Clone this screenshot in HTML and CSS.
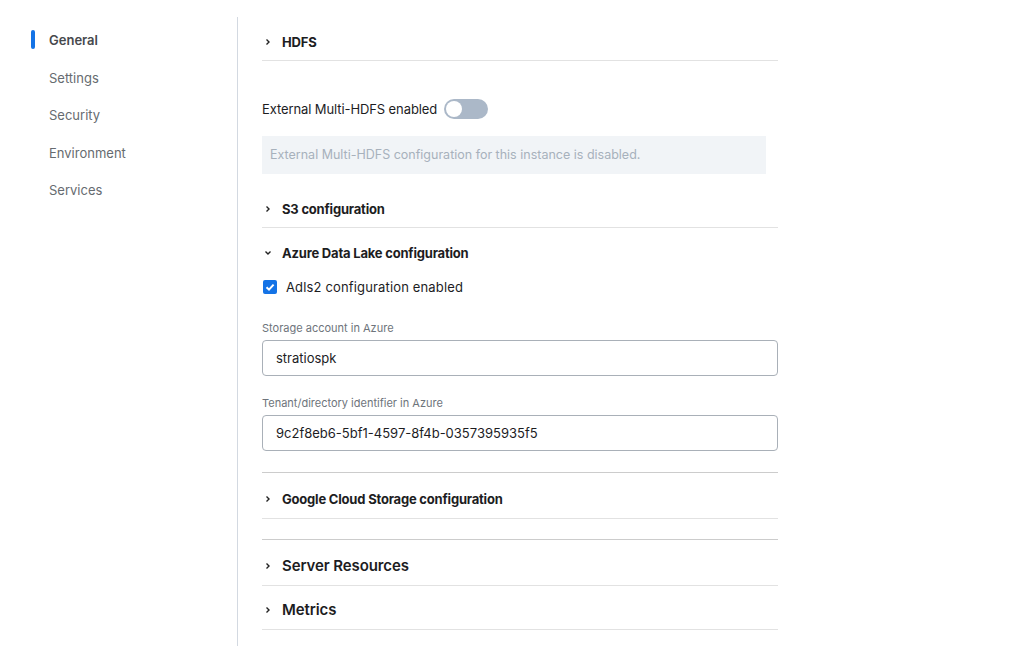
FILE: index.html
```html
<!DOCTYPE html>
<html>
<head>
<meta charset="utf-8">
<link rel="stylesheet" href="styles.css">
</head>
<body>
<div class="layout">
  <nav class="sidebar">
    <a class="nav-item active">General</a>
    <a class="nav-item">Settings</a>
    <a class="nav-item">Security</a>
    <a class="nav-item">Environment</a>
    <a class="nav-item">Services</a>
  </nav>
  <main class="main">
    <div class="section-header">
      <svg class="chev" viewBox="0 0 8 8" width="8" height="8"><path d="M2.5 1.5 L5 4 L2.5 6.5" fill="none" stroke="#222" stroke-width="1.4"/></svg>
      <span class="title">HDFS</span>
    </div>
    <div class="hdfs-body">
      <div class="toggle-row">
        <span>External Multi-HDFS enabled</span>
        <span class="toggle"><span class="knob"></span></span>
      </div>
      <div class="info-box">External Multi-HDFS configuration for this instance is disabled.</div>
    </div>
    <div class="section-header">
      <svg class="chev" viewBox="0 0 8 8" width="8" height="8"><path d="M2.5 1.5 L5 4 L2.5 6.5" fill="none" stroke="#222" stroke-width="1.4"/></svg>
      <span class="title">S3 configuration</span>
    </div>
    <div class="azure">
      <div class="section-header open">
        <svg class="chev" viewBox="0 0 8 8" width="8" height="8"><path d="M1.5 2.5 L4 5 L6.5 2.5" fill="none" stroke="#222" stroke-width="1.4"/></svg>
        <span class="title">Azure Data Lake configuration</span>
      </div>
      <label class="check-row">
        <span class="checkbox"><svg viewBox="0 0 14 14" width="14" height="14"><path d="M3.5 7.2 L6 9.6 L10.6 4.6" fill="none" stroke="#fff" stroke-width="2"/></svg></span>
        <span>Adls2 configuration enabled</span>
      </label>
      <div class="field first">
        <div class="field-label">Storage account in Azure</div>
        <div class="input">stratiospk</div>
      </div>
      <div class="field">
        <div class="field-label">Tenant/directory identifier in Azure</div>
        <div class="input">9c2f8eb6-5bf1-4597-8f4b-0357395935f5</div>
      </div>
    </div>
    <div class="section-header gcs">
      <svg class="chev" viewBox="0 0 8 8" width="8" height="8"><path d="M2.5 1.5 L5 4 L2.5 6.5" fill="none" stroke="#222" stroke-width="1.4"/></svg>
      <span class="title">Google Cloud Storage configuration</span>
    </div>
    <div class="section-header big top-line">
      <svg class="chev" viewBox="0 0 8 8" width="8" height="8"><path d="M2.5 1.5 L5 4 L2.5 6.5" fill="none" stroke="#222" stroke-width="1.4"/></svg>
      <span class="title">Server Resources</span>
    </div>
    <div class="section-header big metrics">
      <svg class="chev" viewBox="0 0 8 8" width="8" height="8"><path d="M2.5 1.5 L5 4 L2.5 6.5" fill="none" stroke="#222" stroke-width="1.4"/></svg>
      <span class="title">Metrics</span>
    </div>
  </main>
</div>
</body>
</html>
```

FILE: styles.css
```css
html, body {
  margin: 0;
  padding: 0;
  background: #fff;
  font-family: Inter, "Noto Sans", sans-serif;
  color: #1d1d1f;
}
.layout {
  display: flex;
  margin-top: 17px;
  min-height: 629px;
}
.sidebar {
  width: 237px;
  border-right: 1px solid #d3d9e1;
  display: flex;
  flex-direction: column;
  padding-top: 13px;
  box-sizing: content-box;
}
.nav-item {
  position: relative;
  display: block;
  padding-left: 49px;
  font-size: 13px;
  line-height: 20px;
  height: 20px;
  margin-bottom: 17.5px;
  color: #666b70;
}
.nav-item.active {
  color: #46494d;
  font-weight: 600;
}
.nav-item.active::before {
  content: "";
  position: absolute;
  left: 31px;
  top: 0;
  width: 4px;
  height: 19px;
  border-radius: 2px;
  background: #1473e6;
}
.main {
  width: 516px;
  padding-left: 24px;
}
.section-header {
  display: flex;
  align-items: center;
  padding: 13px 0 6px;
  border-bottom: 1px solid #e2e2e2;
}
.section-header .title {
  font-size: 13px;
  font-weight: 700;
  line-height: 24px;
  letter-spacing: -0.2px;
  color: #1d1d1f;
}
.section-header.big .title {
  font-size: 15px;
  font-weight: 600;
  letter-spacing: -0.1px;
}
.section-header.open {
  border-bottom: none;
}
.section-header.gcs {
  padding: 14px 0 7px;
}
.section-header.top-line {
  margin-top: 20px;
  border-top: 1px solid #cccccc;
  padding: 14px 0 7px;
}
.section-header.metrics {
  padding: 12px 0 7px;
}
.chev {
  margin-left: 2px;
  margin-right: 10px;
  flex: none;
}
.hdfs-body {
  padding-top: 38px;
  padding-bottom: 10px;
}
.toggle-row {
  display: flex;
  align-items: center;
  gap: 7px;
  font-size: 13px;
  letter-spacing: -0.1px;
  height: 20px;
}
.toggle {
  width: 44px;
  height: 20px;
  border-radius: 10px;
  background: #abb8c8;
  position: relative;
  display: inline-block;
}
.knob {
  position: absolute;
  left: 2px;
  top: 2px;
  width: 16px;
  height: 16px;
  border-radius: 50%;
  background: #fff;
}
.info-box {
  margin-top: 17px;
  width: 504px;
  height: 38px;
  box-sizing: border-box;
  background: #f1f4f7;
  color: #a7b1bc;
  font-size: 12.5px;
  line-height: 38px;
  padding-left: 8px;
}
.azure {
  border-bottom: 1px solid #cccccc;
  padding-bottom: 21px;
}
.check-row {
  display: flex;
  align-items: center;
  gap: 9px;
  margin-top: 9px;
  font-size: 13px;
  letter-spacing: 0.15px;
  height: 14px;
}
.checkbox {
  width: 14px;
  height: 14px;
  margin-left: 1px;
  border-radius: 2px;
  background: #1473e6;
  display: inline-flex;
}
.field.first {
  margin-top: 26px;
}
.field {
  margin-top: 19px;
}
.field-label {
  font-size: 11px;
  line-height: 16px;
  color: #6e747b;
}
.input {
  margin-top: 4px;
  height: 36px;
  box-sizing: border-box;
  border: 1px solid #a9b0b8;
  border-radius: 4px;
  padding-left: 13px;
  font-size: 13px;
  line-height: 34px;
  color: #1d1d1f;
}
```
